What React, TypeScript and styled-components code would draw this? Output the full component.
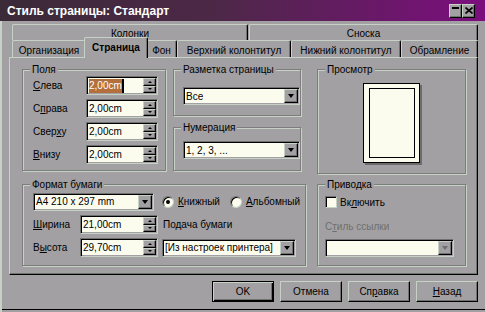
import React from "react";
import styled, { createGlobalStyle, css } from "styled-components";

const C = {
  face: "#a3a0a3",
  light: "#c6d2c6",
  shadow: "#6f726f",
  dark: "#000000",
  field: "#fcfcee",
  disabled: "#6e706e",
};

const GlobalStyle = createGlobalStyle`
  html, body {
    margin: 0;
    padding: 0;
    background: ${C.face};
  }
  body {
    font-family: "Liberation Sans", Arial, sans-serif;
    font-size: 10px;
    color: #000;
  }
`;

const Window = styled.div`
  width: 485px;
  height: 312px;
  box-sizing: border-box;
  background: ${C.face};
  box-shadow: inset 2px 0 0 ${C.light}, inset 0 -2px 0 ${C.face},
    inset 0 -3px 0 ${C.dark};
  display: flex;
  flex-direction: column;
  overflow: hidden;
`;

const TitleBar = styled.div`
  flex: none;
  height: 21px;
  display: flex;
  align-items: center;
  padding: 0 10px 0 7px;
  background: linear-gradient(to right, #3b2a37 0%, #4d2848 45%, #7c0e7e 100%);
`;

const Title = styled.span`
  flex: 1;
  color: #fff;
  font: bold 12px "Liberation Sans", Arial, sans-serif;
`;

const CaptionButton = styled.div`
  width: 13px;
  height: 14px;
  box-sizing: border-box;
  background: ${C.face};
  border: 1px solid;
  border-color: ${C.light} ${C.dark} ${C.dark} ${C.light};
  box-shadow: inset -1px -1px 0 ${C.shadow};
  display: flex;
  justify-content: center;
`;

const MinBar = styled.div`
  width: 7px;
  height: 2px;
  margin-top: 2px;
  background: #000;
`;

const TabArea = styled.div`
  margin: 3px 0 0 9px;
  width: 469px;
  display: flex;
  flex-direction: column;
`;

const TabRow = styled.div<{ $h: number; $gap?: number }>`
  display: flex;
  height: ${(p) => p.$h}px;
  padding-left: 3px;
  gap: ${(p) => p.$gap ?? 0}px;
`;

const Tab = styled.div<{ $w: number; $active?: boolean }>`
  width: ${(p) => p.$w}px;
  box-sizing: border-box;
  border-top: 1px solid ${C.light};
  border-left: 1px solid ${C.light};
  border-right: 1px solid ${C.dark};
  border-radius: 2px 2px 0 0;
  box-shadow: inset -1px 0 0 ${C.shadow};
  background: ${C.face};
  display: flex;
  align-items: center;
  justify-content: center;
  padding-top: 2px;
  white-space: nowrap;

  ${(p) =>
    p.$active &&
    css`
      width: ${p.$w + 4}px;
      height: 21px;
      margin: -3px -2px -1px;
      font-weight: bold;
      padding-top: 0;
      padding-bottom: 1px;
      position: relative;
      z-index: 1;
    `}
`;

const Panel = styled.div`
  height: 218px;
  box-sizing: border-box;
  border-top: 1px solid ${C.light};
  border-left: 1px solid ${C.light};
  border-right: 1px solid ${C.dark};
  border-bottom: 1px solid ${C.dark};
  box-shadow: inset -1px -1px 0 ${C.shadow};
  padding: 11px 0 0 12px;
  display: grid;
  grid-template-columns: 144px 7px 133px 11px 149px;
  grid-template-rows: 105px 82px;
  row-gap: 10px;
  grid-template-areas:
    "fields . middle . preview"
    "format format format . register";
`;

const Group = styled.div<{ $area?: string; $h?: number }>`
  grid-area: ${(p) => p.$area ?? "auto"};
  height: ${(p) => (p.$h ? `${p.$h}px` : "auto")};
  box-sizing: border-box;
  border: 1px solid #7b7e7b;
  box-shadow: 1px 1px 0 ${C.light}, inset 1px 1px 0 ${C.light};
  display: flex;
  flex-direction: column;
  align-self: start;
`;

const GroupTitle = styled.div`
  align-self: flex-start;
  margin: -7px 0 0 7px;
  padding: 0 2px;
  line-height: 13px;
  background: ${C.face};
`;

const MiddleColumn = styled.div`
  grid-area: middle;
  display: flex;
  flex-direction: column;
  gap: 11px;
`;

const Rows = styled.div`
  display: flex;
  flex-direction: column;
  gap: 4px;
  padding-left: 10px;
`;

const FieldRow = styled.div`
  display: grid;
  grid-template-columns: 53px 72px;
  align-items: center;
  height: 19px;
`;

const U = styled.span`
  text-decoration: underline;
`;

const Field = styled.div<{ $w: number; $h?: number }>`
  width: ${(p) => p.$w}px;
  height: ${(p) => p.$h ?? 19}px;
  box-sizing: border-box;
  display: flex;
  border: 1px solid;
  border-color: ${C.shadow} ${C.light} ${C.light} ${C.shadow};
  box-shadow: inset 1px 1px 0 ${C.dark}, inset -1px -1px 0 ${C.face};
  background: ${C.field};
  padding: 1px;
`;

const FieldText = styled.div`
  flex: 1;
  display: flex;
  align-items: center;
  white-space: nowrap;
  overflow: hidden;
  padding-left: 1px;
`;

const Selected = styled.span`
  background: #b4703c;
  color: #fff;
  line-height: 14px;
`;

const Caret = styled.span`
  width: 2px;
  height: 14px;
  background: #000;
`;

const Spin = styled.div`
  width: 13px;
  display: flex;
  flex-direction: column;
`;

const Raised = css`
  box-sizing: border-box;
  background: ${C.face};
  border: 1px solid;
  border-color: ${C.light} ${C.dark} ${C.dark} ${C.light};
  box-shadow: inset -1px -1px 0 ${C.shadow};
`;

const SpinButton = styled.div`
  ${Raised}
  flex: 1;
  display: flex;
  align-items: center;
  justify-content: center;
`;

const SmallArrow = styled.div<{ $up?: boolean }>`
  width: 0;
  height: 0;
  border-left: 2px solid transparent;
  border-right: 2px solid transparent;
  ${(p) =>
    p.$up
      ? css`border-bottom: 2px solid #000;`
      : css`border-top: 2px solid #000;`}
`;

const DropButton = styled.div`
  ${Raised}
  width: 14px;
  display: flex;
  align-items: center;
  justify-content: center;
`;

const Arrow = styled.div<{ $disabled?: boolean }>`
  width: 0;
  height: 0;
  border-left: 3px solid transparent;
  border-right: 3px solid transparent;
  border-top: 4px solid ${(p) => (p.$disabled ? C.disabled : "#000")};
`;

const SelectWrap = styled.div<{ $mt?: number; $ml?: number; $col?: string }>`
  margin: ${(p) => p.$mt ?? 0}px 0 0 ${(p) => p.$ml ?? 0}px;
  grid-column: ${(p) => p.$col ?? "auto"};
`;

const Preview = styled.div`
  align-self: center;
  margin-top: 7px;
  width: 57px;
  height: 80px;
  box-sizing: border-box;
  border: 1px solid #000;
  background: ${C.field};
  box-shadow: 2px 2px 0 #6c6c6c;
  padding: 4px 4px 4px 5px;
  display: flex;
`;

const PreviewInner = styled.div`
  flex: 1;
  border: 1px solid #000;
`;

const FormatGrid = styled.div`
  display: grid;
  grid-template-columns: 47px 82px 140px;
  grid-auto-rows: 19px;
  row-gap: 4px;
  align-items: center;
  padding: 1px 0 0 10px;
`;

const Radios = styled.div`
  display: flex;
  gap: 10px;
`;

const RadioItem = styled.div`
  display: flex;
  align-items: center;
  gap: 4px;
  white-space: nowrap;
`;

const RadioCircle = styled.div<{ $checked?: boolean }>`
  width: 12px;
  height: 12px;
  box-sizing: border-box;
  border-radius: 50%;
  border: 1px solid;
  border-color: ${C.shadow} ${C.light} ${C.light} ${C.shadow};
  box-shadow: inset 1px 1px 0 #000;
  background: ${C.field};
  display: flex;
  align-items: center;
  justify-content: center;

  &::after {
    content: "";
    width: 4px;
    height: 4px;
    border-radius: 50%;
    background: #000;
    display: ${(p) => (p.$checked ? "block" : "none")};
  }
`;

const Text = styled.span<{ $pl?: number }>`
  padding-left: ${(p) => p.$pl ?? 0}px;
  white-space: nowrap;
`;

const RegisterBody = styled.div`
  display: flex;
  flex-direction: column;
  padding-left: 7px;
`;

const CheckRow = styled.div`
  display: flex;
  align-items: center;
  gap: 3px;
  margin-top: 5px;
`;

const CheckBox = styled.div`
  width: 12px;
  height: 12px;
  box-sizing: border-box;
  border: 1px solid;
  border-color: ${C.shadow} ${C.light} ${C.light} ${C.shadow};
  box-shadow: inset 1px 1px 0 #000;
  background: ${C.field};
`;

const DisabledLabel = styled.div`
  margin-top: 12px;
  line-height: 13px;
  color: ${C.disabled};
`;

const ButtonBar = styled.div`
  display: flex;
  justify-content: flex-end;
  gap: 6px;
  margin-top: 6px;
  padding-right: 7px;
`;

const Button = styled.div<{ $default?: boolean }>`
  ${Raised}
  width: 62px;
  height: 21px;
  display: flex;
  align-items: center;
  justify-content: center;

  ${(p) =>
    p.$default &&
    css`
      border-color: #000;
      box-shadow: inset 1px 1px 0 ${C.light}, inset -1px -1px 0 #000,
        inset -2px -2px 0 ${C.shadow};
    `}
`;

function SpinField({
  value,
  width = 72,
  selected,
}: {
  value: string;
  width?: number;
  selected?: boolean;
}) {
  return (
    <Field $w={width}>
      <FieldText>
        {selected ? (
          <>
            <Selected>{value}</Selected>
            <Caret />
          </>
        ) : (
          value
        )}
      </FieldText>
      <Spin>
        <SpinButton>
          <SmallArrow $up />
        </SpinButton>
        <SpinButton>
          <SmallArrow />
        </SpinButton>
      </Spin>
    </Field>
  );
}

function Select({
  value,
  width,
  disabled,
}: {
  value: string;
  width: number;
  disabled?: boolean;
}) {
  return (
    <Field $w={width} $h={18}>
      <FieldText>{value}</FieldText>
      <DropButton>
        <Arrow $disabled={disabled} />
      </DropButton>
    </Field>
  );
}

const rowTabs = [
  { label: "Организация", w: 74 },
  { label: "Страница", w: 60, active: true },
  { label: "Фон", w: 31 },
  { label: "Верхний колонтитул", w: 114 },
  { label: "Нижний колонтитул", w: 110 },
  { label: "Обрамление", w: 77 },
];

export default function App() {
  return (
    <>
      <GlobalStyle />
      <Window>
        <TitleBar>
          <Title>Стиль страницы: Стандарт</Title>
          <CaptionButton>
            <MinBar />
          </CaptionButton>
          <CaptionButton style={{ alignItems: "center" }}>
            <svg width="8" height="7" viewBox="0 0 8 7">
              <path d="M0.5 0.5 L7.5 6.5 M7.5 0.5 L0.5 6.5" stroke="#000" strokeWidth="1.6" />
            </svg>
          </CaptionButton>
        </TitleBar>

        <TabArea>
          <TabRow $h={16} $gap={1}>
            <Tab $w={236}>Колонки</Tab>
            <Tab $w={229}>Сноска</Tab>
          </TabRow>
          <TabRow $h={17}>
            {rowTabs.map((t) => (
              <Tab key={t.label} $w={t.w} $active={t.active}>
                {t.label}
              </Tab>
            ))}
          </TabRow>

          <Panel>
            <Group $area="fields" $h={102}>
              <GroupTitle>Поля</GroupTitle>
              <Rows>
                <FieldRow>
                  <Text>
                    <U>С</U>лева
                  </Text>
                  <SpinField value="2,00cm" selected />
                </FieldRow>
                <FieldRow>
                  <Text>
                    С<U>п</U>рава
                  </Text>
                  <SpinField value="2,00cm" />
                </FieldRow>
                <FieldRow>
                  <Text>
                    Свер<U>х</U>у
                  </Text>
                  <SpinField value="2,00cm" />
                </FieldRow>
                <FieldRow>
                  <Text>
                    <U>В</U>низу
                  </Text>
                  <SpinField value="2,00cm" />
                </FieldRow>
              </Rows>
            </Group>

            <MiddleColumn>
              <Group $h={47}>
                <GroupTitle>Разметка страницы</GroupTitle>
                <SelectWrap $mt={11} $ml={9}>
                  <Select value="Все" width={117} />
                </SelectWrap>
              </Group>
              <Group $h={44}>
                <GroupTitle>Нумерация</GroupTitle>
                <SelectWrap $mt={7} $ml={9}>
                  <Select value="1, 2, 3, ..." width={117} />
                </SelectWrap>
              </Group>
            </MiddleColumn>

            <Group $area="preview" $h={105}>
              <GroupTitle>Просмотр</GroupTitle>
              <Preview>
                <PreviewInner />
              </Preview>
            </Group>

            <Group $area="format" $h={82}>
              <GroupTitle>Формат бумаги</GroupTitle>
              <FormatGrid>
                <SelectWrap $col="1 / 3">
                  <Select value="A4 210 x 297 mm" width={121} />
                </SelectWrap>
                <Radios>
                  <RadioItem>
                    <RadioCircle $checked />
                    <span>
                      <U>К</U>нижный
                    </span>
                  </RadioItem>
                  <RadioItem>
                    <RadioCircle />
                    <span>
                      <U>А</U>льбомный
                    </span>
                  </RadioItem>
                </Radios>

                <Text>
                  <U>Ш</U>ирина
                </Text>
                <SpinField value="21,00cm" width={78} />
                <Text $pl={1}>Подача бумаги</Text>

                <Text>
                  В<U>ы</U>сота
                </Text>
                <SpinField value="29,70cm" width={78} />
                <Select value="[Из настроек принтера]" width={134} />
              </FormatGrid>
            </Group>

            <Group $area="register" $h={82}>
              <GroupTitle>Приводка</GroupTitle>
              <RegisterBody>
                <CheckRow>
                  <CheckBox />
                  <span>
                    Вк<U>л</U>ючить
                  </span>
                </CheckRow>
                <DisabledLabel>
                  С<U>т</U>иль ссылки
                </DisabledLabel>
                <SelectWrap $mt={6}>
                  <Select value="" width={129} disabled />
                </SelectWrap>
              </RegisterBody>
            </Group>
          </Panel>
        </TabArea>

        <ButtonBar>
          <Button $default>OK</Button>
          <Button>Отмена</Button>
          <Button>
            Сп<U>р</U>авка
          </Button>
          <Button>
            <U>Н</U>азад
          </Button>
        </ButtonBar>
      </Window>
    </>
  );
}
